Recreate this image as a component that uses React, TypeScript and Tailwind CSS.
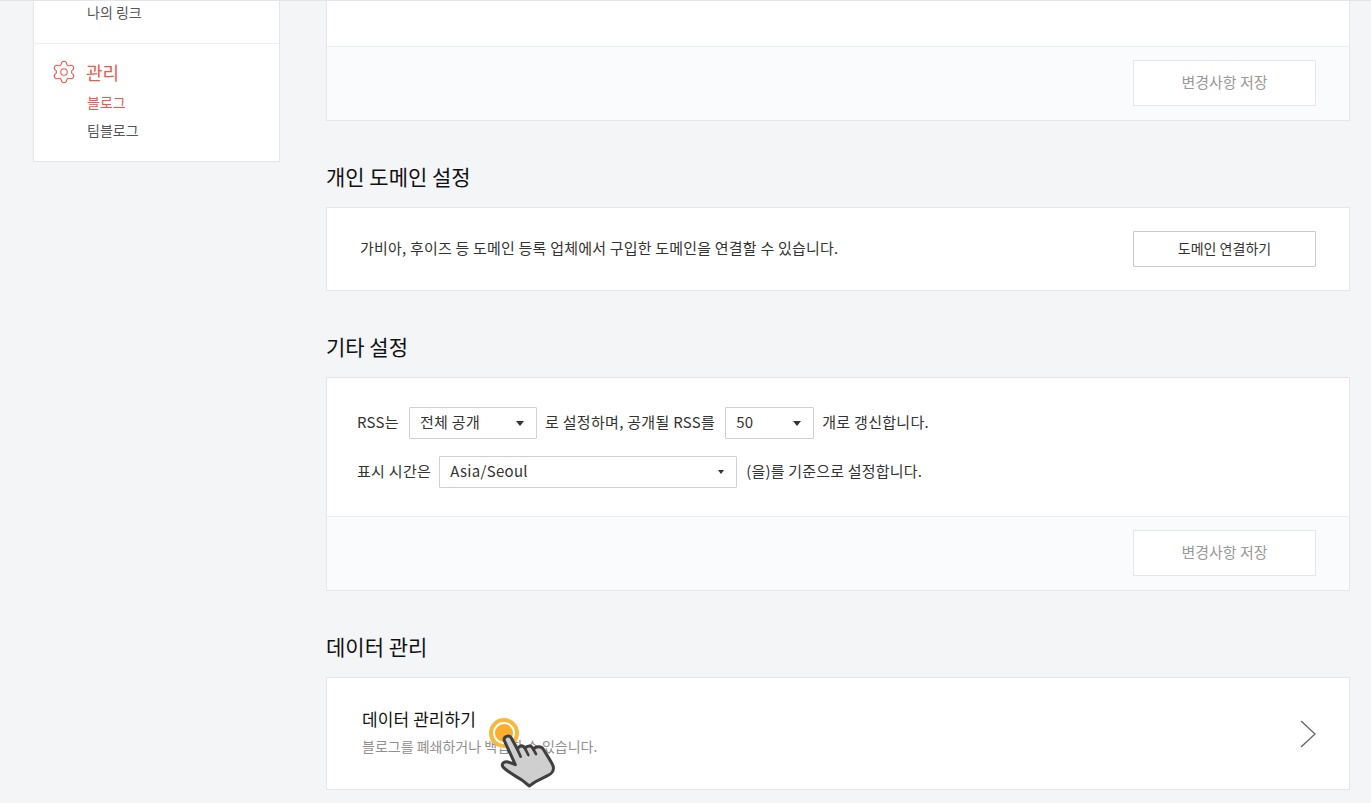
import { Settings } from "lucide-react";

const font = { fontFamily: '"Noto Sans CJK KR", "Noto Sans", sans-serif' };

function Caret({ small }: { small?: boolean }) {
  return (
    <span
      className={
        small
          ? "w-0 h-0 border-x-[3.5px] border-x-transparent border-t-[4px] border-t-[#333]"
          : "w-0 h-0 border-x-[4px] border-x-transparent border-t-[5px] border-t-[#333]"
      }
    />
  );
}

function Select({ label, w, small }: { label: string; w: string; small?: boolean }) {
  return (
    <div className={`${w} pl-[10px] pr-[12px] h-[32px] bg-white border border-[#cfd1d4] rounded-[1px] flex items-center justify-between text-[15px] text-[#333]`}>
      <span className="pb-[1px]">{label}</span>
      <Caret small={small} />
    </div>
  );
}

function SaveFooter() {
  return (
    <div className="h-[74px] bg-[#fafbfc] border-t border-[#eeeff1] flex justify-end pr-[33px] pt-[13px]">
      <div className="w-[183px] h-[46px] pb-[2px] bg-white border border-[#e4e6e8] flex items-center justify-center text-[15px] text-[#999]">변경사항 저장</div>
    </div>
  );
}

function Title({ children }: { children: string }) {
  return <h2 className="text-[21px] leading-[28px] text-[#111] font-normal">{children}</h2>;
}

function Cursor() {
  return (
    <div className="absolute left-[480px] top-[709px] w-[85px] h-[85px] pointer-events-none">
      <div className="absolute left-[9px] top-[8px] w-[30px] h-[30px] rounded-full border-[4px] border-[#f7b83f] bg-white flex items-center justify-center">
        <div className="w-[18px] h-[18px] rounded-full bg-[#fbae2c]" />
      </div>
      <svg className="absolute left-0 top-0" width="85" height="85" viewBox="0 0 255 255">
        <path
          d="M73 92 C69 80 88 72 94 84 L112 118 C117 106 130 104 135 115 C141 106 155 104 160 118 C168 108 184 108 190 118 C200 135 215 155 220 170 C222 182 214 192 204 196 L165 216 L148 228 L128 212 C112 200 88 190 70 172 C62 162 72 152 84 156 L106 164 Z"
          fill="#cfcfcf"
          stroke="#3f3f3f"
          strokeWidth="9"
          strokeLinejoin="round"
        />
        <path d="M112 118 L122 140 M135 115 L145 135 M160 118 L168 132" fill="none" stroke="#3f3f3f" strokeWidth="8" strokeLinecap="round" />
      </svg>
    </div>
  );
}

export default function App() {
  return (
    <div style={font} className="relative w-[1371px] h-[803px] overflow-hidden bg-[#f3f5f7] border-t border-[#e3e5e7] flex items-start">
      <aside className="ml-[33px] w-[247px] h-[161px] bg-white border-x border-b border-[#e4e6e8] shrink-0">
        <div className="h-[43px] pl-[53px] pt-[2px] text-[14px] leading-[18px] text-[#555] border-b border-[#eeeff1]">나의 링크</div>
        <div className="pt-[16px] pl-[17px]">
          <div className="flex items-center gap-[9px] h-[24px] text-[#f0584c]">
            <Settings size={26} strokeWidth={1} />
            <span className="text-[18px] leading-[24px]">관리</span>
          </div>
          <div className="pl-[36px] mt-[9px] text-[14px] leading-[18px] text-[#f0584c]">블로그</div>
          <div className="pl-[36px] mt-[10px] text-[14px] leading-[18px] text-[#555]">팀블로그</div>
        </div>
      </aside>

      <main className="ml-[46px] w-[1024px] shrink-0">
        <section className="bg-white border-x border-b border-[#e4e6e8] pt-[45px]">
          <SaveFooter />
        </section>

        <div className="mt-[41px]"><Title>개인 도메인 설정</Title></div>
        <section className="mt-[17px] h-[84px] bg-white border border-[#e4e6e8] flex items-center justify-between pl-[33px] pr-[33px]">
          <p className="text-[15px] tracking-[0.2px] text-[#333] pb-[1px]">가비아, 후이즈 등 도메인 등록 업체에서 구입한 도메인을 연결할 수 있습니다.</p>
          <div className="w-[183px] h-[36px] pb-[1px] bg-white border border-[#c8cacd] rounded-[1px] flex items-center justify-center text-[14px] text-[#333]">도메인 연결하기</div>
        </section>

        <div className="mt-[41px]"><Title>기타 설정</Title></div>
        <section className="mt-[17px] bg-white border border-[#e4e6e8]">
          <div className="h-[138px] pl-[30px] pt-[29px] text-[15px] tracking-[0.3px] text-[#333]">
            <div className="flex items-center h-[32px]">
              <span className="pb-[2px]">RSS는</span>
              <div className="ml-[10px]"><Select label="전체 공개" w="w-[128px]" /></div>
              <span className="ml-[8px] pb-[2px]">로 설정하며, 공개될 RSS를</span>
              <div className="ml-[10px]"><Select label="50" w="w-[89px]" /></div>
              <span className="ml-[8px] pb-[2px]">개로 갱신합니다.</span>
            </div>
            <div className="flex items-center h-[32px] mt-[17px]">
              <span className="pb-[2px]">표시 시간은</span>
              <div className="ml-[8px]"><Select label="Asia/Seoul" w="w-[298px]" small /></div>
              <span className="ml-[9px] pb-[2px] tracking-[0.2px]">(을)를 기준으로 설정합니다.</span>
            </div>
          </div>
          <SaveFooter />
        </section>

        <div className="mt-[41px]"><Title>데이터 관리</Title></div>
        <section className="mt-[17px] h-[113px] bg-white border border-[#e4e6e8] flex items-center justify-between pl-[35px] pr-[33px]">
          <div className="pb-[6px]">
            <div className="text-[17px] tracking-[0.1px] leading-[24px] text-[#111]">데이터 관리하기</div>
            <div className="mt-[6px] text-[14px] leading-[18px] text-[#909090]">블로그를 폐쇄하거나 백업할 수 있습니다.</div>
          </div>
          <svg width="16" height="28" viewBox="0 0 16 28" fill="none" stroke="#666" strokeWidth="1.3"><path d="M1 1 L15 14 L1 27" /></svg>
        </section>
      </main>
      <Cursor />
    </div>
  );
}
